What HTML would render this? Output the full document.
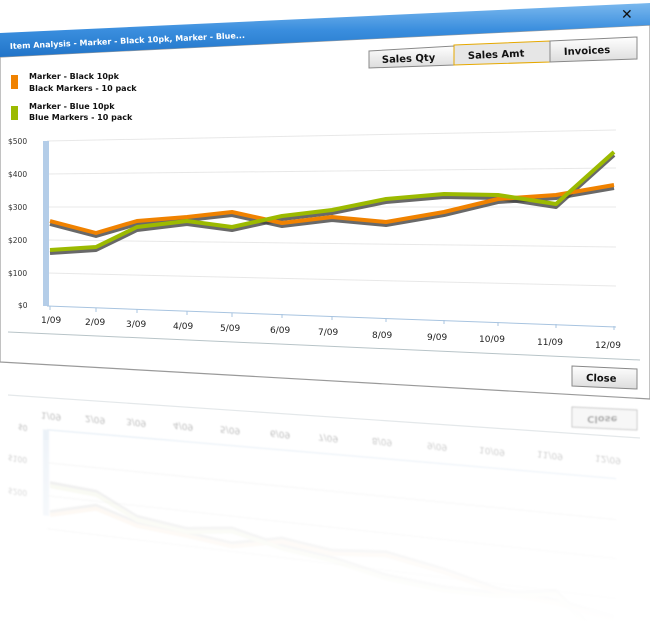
<!DOCTYPE html>
<html><head><style>
html,body{margin:0;padding:0;background:#fff;width:650px;height:625px;overflow:hidden}
svg{display:block;font-family:"DejaVu Sans","Liberation Sans",sans-serif}
</style></head><body>
<svg width="650" height="625" viewBox="0 0 650 625" xmlns="http://www.w3.org/2000/svg">
<defs>
<linearGradient id="tb" x1="0" y1="0" x2="0" y2="1">
<stop offset="0" stop-color="#7ab8ee"/><stop offset="0.5" stop-color="#3a8ede"/><stop offset="1" stop-color="#2174c8"/>
</linearGradient>
<linearGradient id="bt" x1="0" y1="0" x2="0" y2="1">
<stop offset="0" stop-color="#ffffff"/><stop offset="1" stop-color="#dcdcdc"/>
</linearGradient>
<linearGradient id="fade" x1="0" y1="0" x2="0" y2="1">
<stop offset="0" stop-color="#fff" stop-opacity="0.2"/><stop offset="0.8" stop-color="#fff" stop-opacity="0.85"/><stop offset="1" stop-color="#fff" stop-opacity="1"/>
</linearGradient>
<filter id="bl"><feGaussianBlur stdDeviation="0.7"/></filter>
</defs>
<!-- window body -->
<polygon points="0,57 650,25 650,399 0,362" fill="#fff" stroke="#9a9a9a" stroke-width="1.2"/>
<!-- title bar -->
<polygon points="0,33 650,3 650,25 0,57" fill="url(#tb)"/>
<text x="10" y="49" font-size="8" font-weight="bold" fill="#fff" transform="rotate(-2.7 10 49)">Item Analysis - Marker - Black 10pk, Marker - Blue...</text>
<text x="621" y="19" font-size="14" font-weight="bold" fill="#111">✕</text>
<!-- buttons -->
<polygon points="369,51 454,46 454,65 369,68" fill="url(#bt)" stroke="#888"/>
<text x="382" y="63" font-size="10" font-weight="bold" fill="#111" transform="rotate(-2.5 382 63)">Sales Qty</text>
<polygon points="454,45 550,41 550,62 454,65" fill="#e6e6e6" stroke="#e5a800"/>
<text x="468" y="59" font-size="10" font-weight="bold" fill="#111" transform="rotate(-2.5 468 59)">Sales Amt</text>
<polygon points="550,41 637,37 637,59 550,62" fill="url(#bt)" stroke="#888"/>
<text x="564" y="55" font-size="10" font-weight="bold" fill="#111" transform="rotate(-2.5 564 55)">Invoices</text>
<!-- legend -->
<rect x="11" y="75" width="7" height="14" fill="#f08200"/>
<text x="29" y="79" font-size="8" font-weight="bold" fill="#111">Marker - Black 10pk</text>
<text x="29" y="91" font-size="8" font-weight="bold" fill="#111">Black Markers - 10 pack</text>
<rect x="11" y="106" width="7" height="14" fill="#9cba00"/>
<text x="29" y="109" font-size="8" font-weight="bold" fill="#111">Marker - Blue 10pk</text>
<text x="29" y="120" font-size="8" font-weight="bold" fill="#111">Blue Markers - 10 pack</text>
<!-- grid -->
<g stroke="#e8e8e8" stroke-width="1" fill="none">
<line x1="47" y1="141" x2="616" y2="130"/>
<line x1="47" y1="174" x2="616" y2="168"/>
<line x1="47" y1="207" x2="616" y2="207"/>
<line x1="47" y1="240" x2="616" y2="247"/>
<line x1="47" y1="273" x2="616" y2="286"/>
</g>
<g font-size="7.5" fill="#333">
<text x="8" y="144">$500</text><text x="8" y="177">$400</text><text x="8" y="210">$300</text>
<text x="8" y="243">$200</text><text x="8" y="276">$100</text><text x="18" y="308">$0</text>
</g>
<rect x="43" y="141" width="6" height="165" fill="#b4cde8"/>
<line x1="47" y1="306" x2="616" y2="327" stroke="#a8c4e0"/>
<g stroke="#a8c4e0">
<line x1="50" y1="306" x2="50" y2="310"/><line x1="96" y1="308" x2="96" y2="312"/><line x1="137" y1="309" x2="137" y2="313"/>
<line x1="187" y1="311" x2="187" y2="315"/><line x1="232" y1="313" x2="232" y2="317"/><line x1="282" y1="314" x2="282" y2="318"/>
<line x1="332" y1="316" x2="332" y2="320"/><line x1="386" y1="318" x2="386" y2="322"/><line x1="444" y1="320" x2="444" y2="324"/>
<line x1="498" y1="322" x2="498" y2="326"/><line x1="556" y1="324" x2="556" y2="328"/><line x1="614" y1="326" x2="614" y2="330"/>
</g>
<g font-size="9" fill="#222">
<text x="41" y="323">1/09</text><text x="85" y="325">2/09</text><text x="126" y="327">3/09</text>
<text x="173" y="329">4/09</text><text x="220" y="331">5/09</text><text x="270" y="333">6/09</text>
<text x="318" y="335">7/09</text><text x="372" y="338">8/09</text><text x="427" y="340">9/09</text>
<text x="479" y="342">10/09</text><text x="537" y="345">11/09</text><text x="595" y="348">12/09</text>
</g>
<line x1="8" y1="332" x2="640" y2="360" stroke="#b8c4c8" stroke-width="1"/>
<!-- series -->
<g fill="none" stroke-width="4" stroke-linejoin="round">
<polyline stroke="#444" opacity="0.8" points="50,224 96,236 137,224 187,220 232,215 282,226 332,220 386,225 444,215 498,202 556,198 614,188"/>
<polyline stroke="#444" opacity="0.8" points="50,253 96,250 137,230 187,224 232,230 282,219 332,213 386,202 444,197 498,198 556,207 614,155"/>
<polyline stroke="#f08200" points="50,221 96,233 137,221 187,217 232,212 282,223 332,217 386,222 444,212 498,199 556,195 614,185"/>
<polyline stroke="#9cba00" points="50,250 96,247 137,227 187,221 232,227 282,216 332,210 386,199 444,194 498,195 556,204 614,152"/>
</g>
<!-- close -->
<polygon points="572,366 637,369 637,389 572,386" fill="url(#bt)" stroke="#888"/>
<text x="586" y="381" font-size="10" font-weight="bold" fill="#111" transform="rotate(1.5 586 381)">Close</text>
<!-- reflection -->
<line x1="8" y1="395" x2="640" y2="438" stroke="#e4e8ea" stroke-width="1.2"/>
<g opacity="0.55" filter="url(#bl)">
<polygon points="572,407 637,410 637,430 572,427" fill="#f2f2f2" stroke="#999"/>
<text x="0" y="0" font-size="10" font-weight="bold" fill="#555" transform="translate(587,416) scale(1,-1)">Close</text>
</g>
<g opacity="0.35" filter="url(#bl)" transform="matrix(1,0.1227,0,-1,0,730)">
<g font-size="9" fill="#444">
<text x="41" y="323">1/09</text><text x="85" y="325">2/09</text><text x="126" y="327">3/09</text>
<text x="173" y="329">4/09</text><text x="220" y="331">5/09</text><text x="270" y="333">6/09</text>
<text x="318" y="335">7/09</text><text x="372" y="338">8/09</text><text x="427" y="340">9/09</text>
<text x="479" y="342">10/09</text><text x="537" y="345">11/09</text><text x="595" y="348">12/09</text>
</g>
<line x1="47" y1="306" x2="616" y2="327" stroke="#a8c4e0"/>
<g stroke="#d8d8d8"><line x1="47" y1="273" x2="616" y2="286"/><line x1="47" y1="240" x2="616" y2="247"/><line x1="47" y1="207" x2="616" y2="207"/></g>
<rect x="43" y="220" width="6" height="86" fill="#c8d8ea"/>
<g font-size="7.5" fill="#444">
<text x="18" y="308">$0</text><text x="8" y="276">$100</text><text x="8" y="243">$200</text>
</g>
<g fill="none" stroke-width="4" opacity="0.45">
<polyline stroke="#666" points="50,253 96,250 137,230 187,224 232,230 282,219 332,213 386,202 444,197 498,198 556,207 614,155"/>
<polyline stroke="#666" points="50,224 96,236 137,224 187,220 232,215 282,226 332,220 386,225 444,215 498,202 556,198 614,188"/>
<polyline stroke="#e8b070" points="50,221 96,233 137,221 187,217 232,212 282,223 332,217 386,222 444,212 498,199 556,195 614,185"/>
<polyline stroke="#c0cc80" points="50,250 96,247 137,227 187,221 232,227 282,216 332,210 386,199 444,194 498,195 556,204 614,152"/>
</g>
</g>
<rect x="0" y="440" width="650" height="185" fill="url(#fade)"/>
</svg>
</body></html>
